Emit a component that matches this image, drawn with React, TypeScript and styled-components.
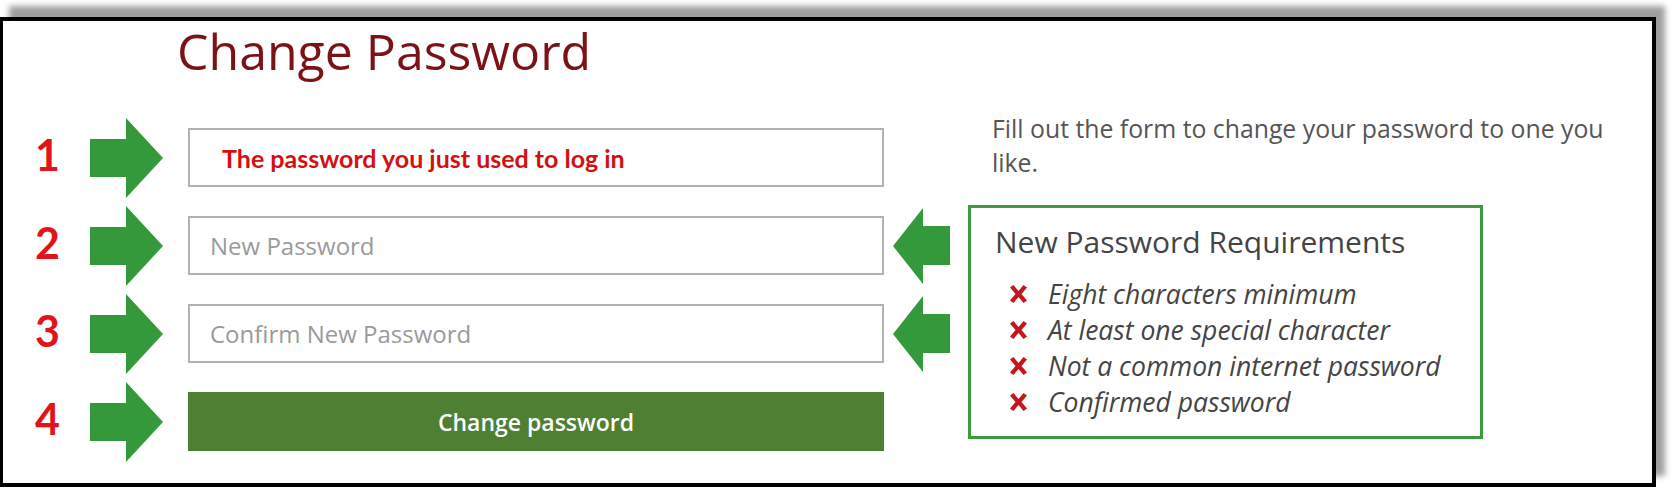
import React from "react";
import styled, { createGlobalStyle } from "styled-components";

interface Step {
  num: number;
  kind: "note" | "input" | "button";
  text: string;
  pointer: boolean;
}

const GlobalStyle = createGlobalStyle`
  html, body {
    margin: 0;
    padding: 0;
    background: #fff;
  }
  body {
    font-family: "Open Sans", "Noto Sans", sans-serif;
  }
`;

const Page = styled.div`
  padding: 17px 18px 0 0;
`;

const Frame = styled.div`
  box-sizing: border-box;
  height: 470px;
  border: 4px solid #000;
  border-left-width: 3px;
  background: #fff;
  box-shadow: 9px -11px 6px rgba(0, 0, 0, 0.38);
`;

const Title = styled.h1`
  margin: 0 0 0 174px;
  font-size: 50px;
  line-height: 60px;
  font-weight: 400;
  color: #7b1316;
`;

const Main = styled.div`
  display: flex;
  align-items: flex-start;
  padding: 30px 0 0 32px;
`;

const Steps = styled.div`
  display: grid;
  grid-template-columns: 55px 98px 696px 66px;
  grid-auto-rows: 59px;
  row-gap: 29px;
  margin-top: 17px;
`;

const StepNumber = styled.div`
  align-self: center;
  margin-top: -6px;
  font-family: "Lato", "Liberation Sans", sans-serif;
  font-weight: 700;
  font-size: 43px;
  line-height: 1;
  color: #e3131b;
`;

const ArrowSlot = styled.div<{ $side: "left" | "right" }>`
  align-self: center;
  justify-self: ${(p) => (p.$side === "left" ? "start" : "end")};
  display: flex;
`;

const Field = styled.div<{ $tone: "note" | "placeholder" }>`
  box-sizing: border-box;
  display: flex;
  align-items: center;
  border: 2px solid #b2b2b2;
  background: #fff;
  padding-left: ${(p) => (p.$tone === "note" ? "32px" : "20px")};
  font-family: ${(p) =>
    p.$tone === "note"
      ? '"Lato", "Liberation Sans", sans-serif'
      : '"Open Sans", "Noto Sans", sans-serif'};
  font-weight: ${(p) => (p.$tone === "note" ? 700 : 400)};
  font-size: ${(p) => (p.$tone === "note" ? "25px" : "24px")};
  color: ${(p) => (p.$tone === "note" ? "#d4100f" : "#9a9a9a")};
`;

const SubmitButton = styled.button`
  border: 0;
  margin: 0;
  background: #4e7f32;
  color: #fff;
  font-family: "Open Sans", "Noto Sans", sans-serif;
  font-size: 23px;
  font-weight: 600;
  cursor: pointer;
`;

const Info = styled.div`
  margin-left: 18px;
  display: flex;
  flex-direction: column;
  align-items: flex-start;
`;

const Intro = styled.p`
  margin: 0 0 0 24px;
  width: 650px;
  font-size: 24.8px;
  line-height: 34px;
  color: #555;
`;

const RequirementsBox = styled.div`
  box-sizing: border-box;
  width: 515px;
  height: 234px;
  margin-top: 26px;
  border: 3px solid #3c9a3f;
  padding: 16px 0 0 24px;
`;

const RequirementsTitle = styled.h2`
  margin: 0 0 16px;
  font-size: 30px;
  line-height: 36px;
  font-weight: 400;
  color: #444;
`;

const RequirementList = styled.ul`
  list-style: none;
  margin: 0 0 0 14px;
  padding: 0;
`;

const RequirementItem = styled.li`
  display: flex;
  align-items: center;
  gap: 20px;
  height: 36px;
  font-size: 26.5px;
  font-style: italic;
  color: #444;
  svg {
    flex: none;
  }
`;

const RightArrow = () => (
  <svg width="73" height="80" viewBox="0 0 73 80">
    <polygon points="0,21 36,21 36,0 73,40 36,80 36,59 0,59" fill="#33993a" />
  </svg>
);

const LeftArrow = () => (
  <svg width="57" height="76" viewBox="0 0 57 76">
    <polygon points="0,38 30,0 30,18 57,18 57,57 30,57 30,76" fill="#33993a" />
  </svg>
);

const CrossMark = () => (
  <svg width="19" height="18" viewBox="0 0 19 18">
    <path
      d="M1 2.5 L4.5 0 L9.5 6 L14.5 0 L18 2.5 L12.5 9 L18 15.5 L14.5 18 L9.5 12 L4.5 18 L1 15.5 L6.5 9 Z"
      fill="#c4161c"
    />
  </svg>
);

const steps: Step[] = [
  { num: 1, kind: "note", text: "The password you just used to log in", pointer: false },
  { num: 2, kind: "input", text: "New Password", pointer: true },
  { num: 3, kind: "input", text: "Confirm New Password", pointer: true },
  { num: 4, kind: "button", text: "Change password", pointer: false },
];

const requirements = [
  "Eight characters minimum",
  "At least one special character",
  "Not a common internet password",
  "Confirmed password",
];

const App: React.FC = () => {
  return (
    <Page>
      <GlobalStyle />
      <Frame>
        <Title>Change Password</Title>
        <Main>
          <Steps>
            {steps.map((step) => (
              <React.Fragment key={step.num}>
                <StepNumber>{step.num}</StepNumber>
                <ArrowSlot $side="left">
                  <RightArrow />
                </ArrowSlot>
                {step.kind === "button" ? (
                  <SubmitButton>{step.text}</SubmitButton>
                ) : (
                  <Field $tone={step.kind === "note" ? "note" : "placeholder"}>
                    {step.text}
                  </Field>
                )}
                <ArrowSlot $side="right">{step.pointer && <LeftArrow />}</ArrowSlot>
              </React.Fragment>
            ))}
          </Steps>
          <Info>
            <Intro>Fill out the form to change your password to one you like.</Intro>
            <RequirementsBox>
              <RequirementsTitle>New Password Requirements</RequirementsTitle>
              <RequirementList>
                {requirements.map((req) => (
                  <RequirementItem key={req}>
                    <CrossMark />
                    {req}
                  </RequirementItem>
                ))}
              </RequirementList>
            </RequirementsBox>
          </Info>
        </Main>
      </Frame>
    </Page>
  );
};

export default App;
